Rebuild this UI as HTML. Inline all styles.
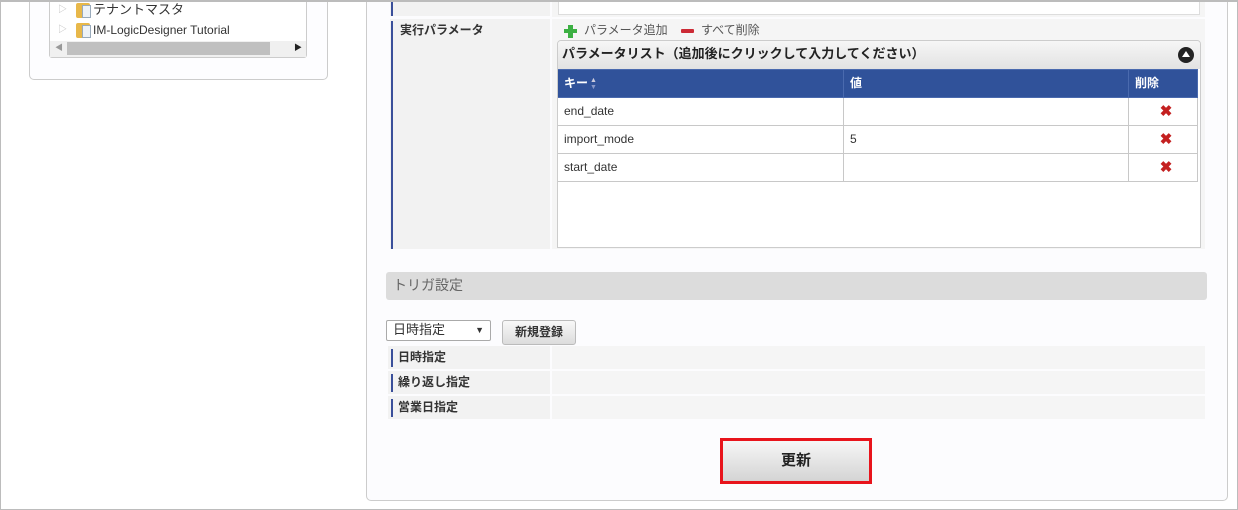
<!DOCTYPE html>
<html><head><meta charset="utf-8">
<style>
*{box-sizing:border-box;margin:0;padding:0}
body{width:1238px;height:510px;overflow:hidden;background:#fff;position:relative;font-family:"Liberation Sans","Noto Sans CJK JP",sans-serif;color:#333;font-size:12px;line-height:1.2}
.a{position:absolute}
.lbl{background:#f2f2f2;font-weight:bold;font-size:12px;padding-left:10px}
.bar{position:absolute;left:1px;width:2px;background:#3a4f9a}
.val{background:#f5f5f5}
td{border:1px solid #c8c8c8;height:28px;padding-left:6px;font-size:12px;color:#333}
</style></head><body>
<!-- left panel -->
<div class="a" style="left:29px;top:-10px;width:299px;height:90px;border:1px solid #ccc;border-radius:5px;background:#fdfdff"></div>
<div class="a" style="left:49px;top:-5px;width:258px;height:63px;border:1px solid #ccc;border-radius:3px;background:#fff"></div>
<div class="a" style="left:58px;top:4px;color:#bbb;font-size:9px">▷</div>
<div class="a" style="left:58px;top:24px;color:#bbb;font-size:9px">▷</div>
<div class="a" style="left:76px;top:3px;width:14px;height:15px;background:#e8b84a;border-radius:2px"></div>
<div class="a" style="left:82px;top:5px;width:9px;height:13px;background:#eef3f8;border:1px solid #9ab"></div>
<div class="a" style="left:76px;top:23px;width:14px;height:15px;background:#e8b84a;border-radius:2px"></div>
<div class="a" style="left:82px;top:25px;width:9px;height:13px;background:#eef3f8;border:1px solid #9ab"></div>
<div class="a" style="left:93px;top:2px;font-size:13px;line-height:16px">テナントマスタ</div>
<div class="a" style="left:93px;top:23px;font-size:12px;line-height:15px">IM-LogicDesigner Tutorial</div>
<div class="a" style="left:50px;top:41px;width:256px;height:16px;background:#f0f0f0"></div>
<div class="a" style="left:67px;top:42px;width:203px;height:13px;background:#c0c0c0"></div>
<div class="a" style="left:55px;top:43px;font-size:8px;color:#999">◀</div>
<div class="a" style="left:294px;top:43px;font-size:8px;color:#222">▶</div>
<!-- right panel -->
<div class="a" style="left:366px;top:-10px;width:862px;height:511px;border:1px solid #ccc;border-radius:5px;background:#fcfcfe"></div>
<div class="a lbl" style="left:390px;top:0;width:160px;height:16px"><div class="bar" style="top:0;height:16px"></div></div>
<div class="a val" style="left:552px;top:0;width:653px;height:17px"></div>
<div class="a" style="left:558px;top:0;width:642px;height:15px;background:#fff;border:1px solid #ddd;border-top:none"></div>
<div class="a lbl" style="left:390px;top:19px;width:160px;height:230px;padding-top:4px">実行パラメータ<div class="bar" style="top:2px;height:228px"></div></div>
<div class="a val" style="left:552px;top:19px;width:653px;height:230px"></div>
<div class="a" style="left:564px;top:29px;width:13px;height:4px;background:#3cb043"></div>
<div class="a" style="left:568px;top:25px;width:5px;height:13px;background:#3cb043"></div>
<div class="a" style="left:584px;top:23px;font-size:12px;color:#555">パラメータ追加</div>
<div class="a" style="left:681px;top:29px;width:13px;height:4px;background:#cc2a35;border-radius:1px"></div>
<div class="a" style="left:701px;top:23px;font-size:12px;color:#555">すべて削除</div>
<div class="a" style="left:557px;top:40px;width:644px;height:208px;border:1px solid #ccc;border-radius:4px 4px 0 0;background:#fff;overflow:hidden">
 <div style="height:28px;background:linear-gradient(#f6f6f6,#e2e2e2);font-weight:bold;font-size:13px;padding:5px 0 0 4px;color:#222">パラメータリスト（追加後にクリックして入力してください）</div>
 <div class="a" style="left:620px;top:6px;width:16px;height:16px;border-radius:50%;background:#222"><div style="position:absolute;left:4px;top:4px;border-left:4px solid transparent;border-right:4px solid transparent;border-bottom:6px solid #fff"></div></div>
 <table style="border-collapse:collapse;width:641px;margin-left:-1px">
 <tr style="background:#30529a;color:#fff;font-weight:bold"><td style="height:28px;color:#fff;width:286px;border-color:#4a6aae">キー<span style="display:inline-block;vertical-align:middle;font-size:7px;line-height:7px;color:#ccd;margin-left:2px">▲<br><span style="color:#8898c8">▼</span></span></td><td style="color:#fff;width:285px;border-color:#4a6aae">値</td><td style="color:#fff;border-color:#4a6aae">削除</td></tr>
 <tr><td>end_date</td><td></td><td style="text-align:center;color:#c42020;font-weight:bold;font-size:15px">✖</td></tr>
 <tr><td>import_mode</td><td>5</td><td style="text-align:center;color:#c42020;font-weight:bold;font-size:15px">✖</td></tr>
 <tr><td>start_date</td><td></td><td style="text-align:center;color:#c42020;font-weight:bold;font-size:15px">✖</td></tr>
 </table>
</div>
<div class="a" style="left:386px;top:272px;width:821px;height:28px;background:#dcdcdc;border-radius:3px;font-size:14px;color:#666;padding:5px 0 0 7px">トリガ設定</div>
<div class="a" style="left:386px;top:320px;width:105px;height:21px;border:1px solid #aaa;border-radius:2px;background:#fff;font-size:13px;line-height:18px;padding-left:6px">日時指定<span style="position:absolute;right:6px;top:0;font-size:9px">▼</span></div>
<div class="a" style="left:502px;top:320px;width:74px;height:25px;border:1px solid #bbb;border-radius:3px;background:linear-gradient(#f8f8f8,#dcdcdc);font-weight:bold;font-size:12px;text-align:center;line-height:22px">新規登録</div>
<div class="a lbl" style="left:388px;top:346px;width:162px;height:23px;line-height:23px">日時指定<div class="bar" style="left:3px;top:3px;height:18px"></div></div>
<div class="a val" style="left:552px;top:346px;width:653px;height:23px"></div>
<div class="a lbl" style="left:388px;top:371px;width:162px;height:23px;line-height:23px">繰り返し指定<div class="bar" style="left:3px;top:3px;height:18px"></div></div>
<div class="a val" style="left:552px;top:371px;width:653px;height:23px"></div>
<div class="a lbl" style="left:388px;top:396px;width:162px;height:23px;line-height:23px">営業日指定<div class="bar" style="left:3px;top:3px;height:18px"></div></div>
<div class="a val" style="left:552px;top:396px;width:653px;height:23px"></div>
<div class="a" style="left:720px;top:438px;width:152px;height:46px;border:3px solid #e8141c;background:linear-gradient(#f6f6f6,#d4d4d4);font-weight:bold;font-size:15px;text-align:center;line-height:40px;color:#222">更新</div>
<div class="a" style="left:0;top:0;width:1238px;height:510px;border:1px solid #bcbcbc;border-top:2px solid #bcbcbc;z-index:10"></div>
</body></html>
